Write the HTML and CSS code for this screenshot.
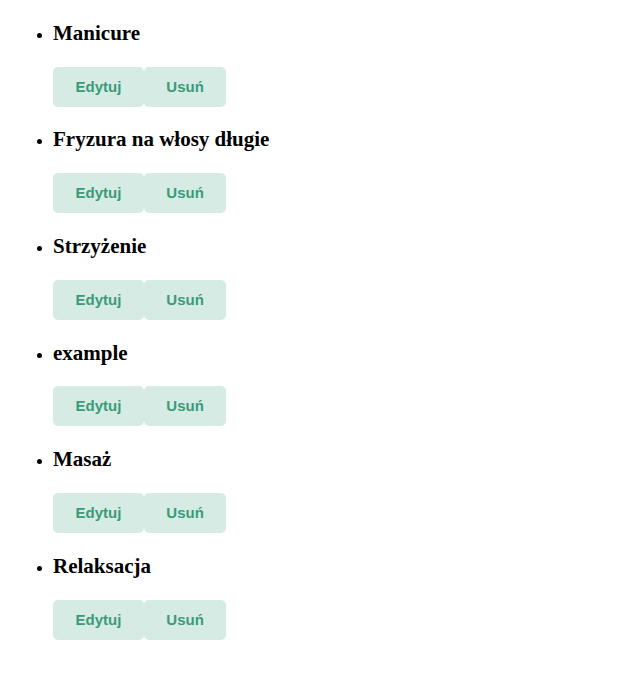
FILE: index.html
```
<!DOCTYPE html>
<html>
<head>
<meta charset="utf-8">
<link rel="stylesheet" href="styles.css">
</head>
<body>
<ul class="services">
  <li><h3 class="name">Manicure</h3><div class="actions"><button class="btn">Edytuj</button><button class="btn">Usuń</button></div></li>
  <li><h3 class="name">Fryzura na włosy długie</h3><div class="actions"><button class="btn">Edytuj</button><button class="btn">Usuń</button></div></li>
  <li><h3 class="name">Strzyżenie</h3><div class="actions"><button class="btn">Edytuj</button><button class="btn">Usuń</button></div></li>
  <li><h3 class="name">example</h3><div class="actions"><button class="btn">Edytuj</button><button class="btn">Usuń</button></div></li>
  <li><h3 class="name">Masaż</h3><div class="actions"><button class="btn">Edytuj</button><button class="btn">Usuń</button></div></li>
  <li><h3 class="name">Relaksacja</h3><div class="actions"><button class="btn">Edytuj</button><button class="btn">Usuń</button></div></li>
</ul>
</body>
</html>
```

FILE: styles.css
```
body {
  margin: 0;
  font-family: "Liberation Serif", serif;
  background: #fff;
  color: #000;
}
.services {
  padding: 0 0 0 53px;
  margin: 0;
}
.name {
  font-size: 21px;
  font-weight: bold;
  margin: 20.8px 0;
}
.actions {
  display: flex;
}
.btn {
  font-family: "Liberation Sans", Arial, sans-serif;
  font-size: 15px;
  font-weight: bold;
  color: #3a9b79;
  background: #d5ebe3;
  border: none;
  border-radius: 5px;
  padding: 11px 22.5px;
  line-height: 18px;
}
```
